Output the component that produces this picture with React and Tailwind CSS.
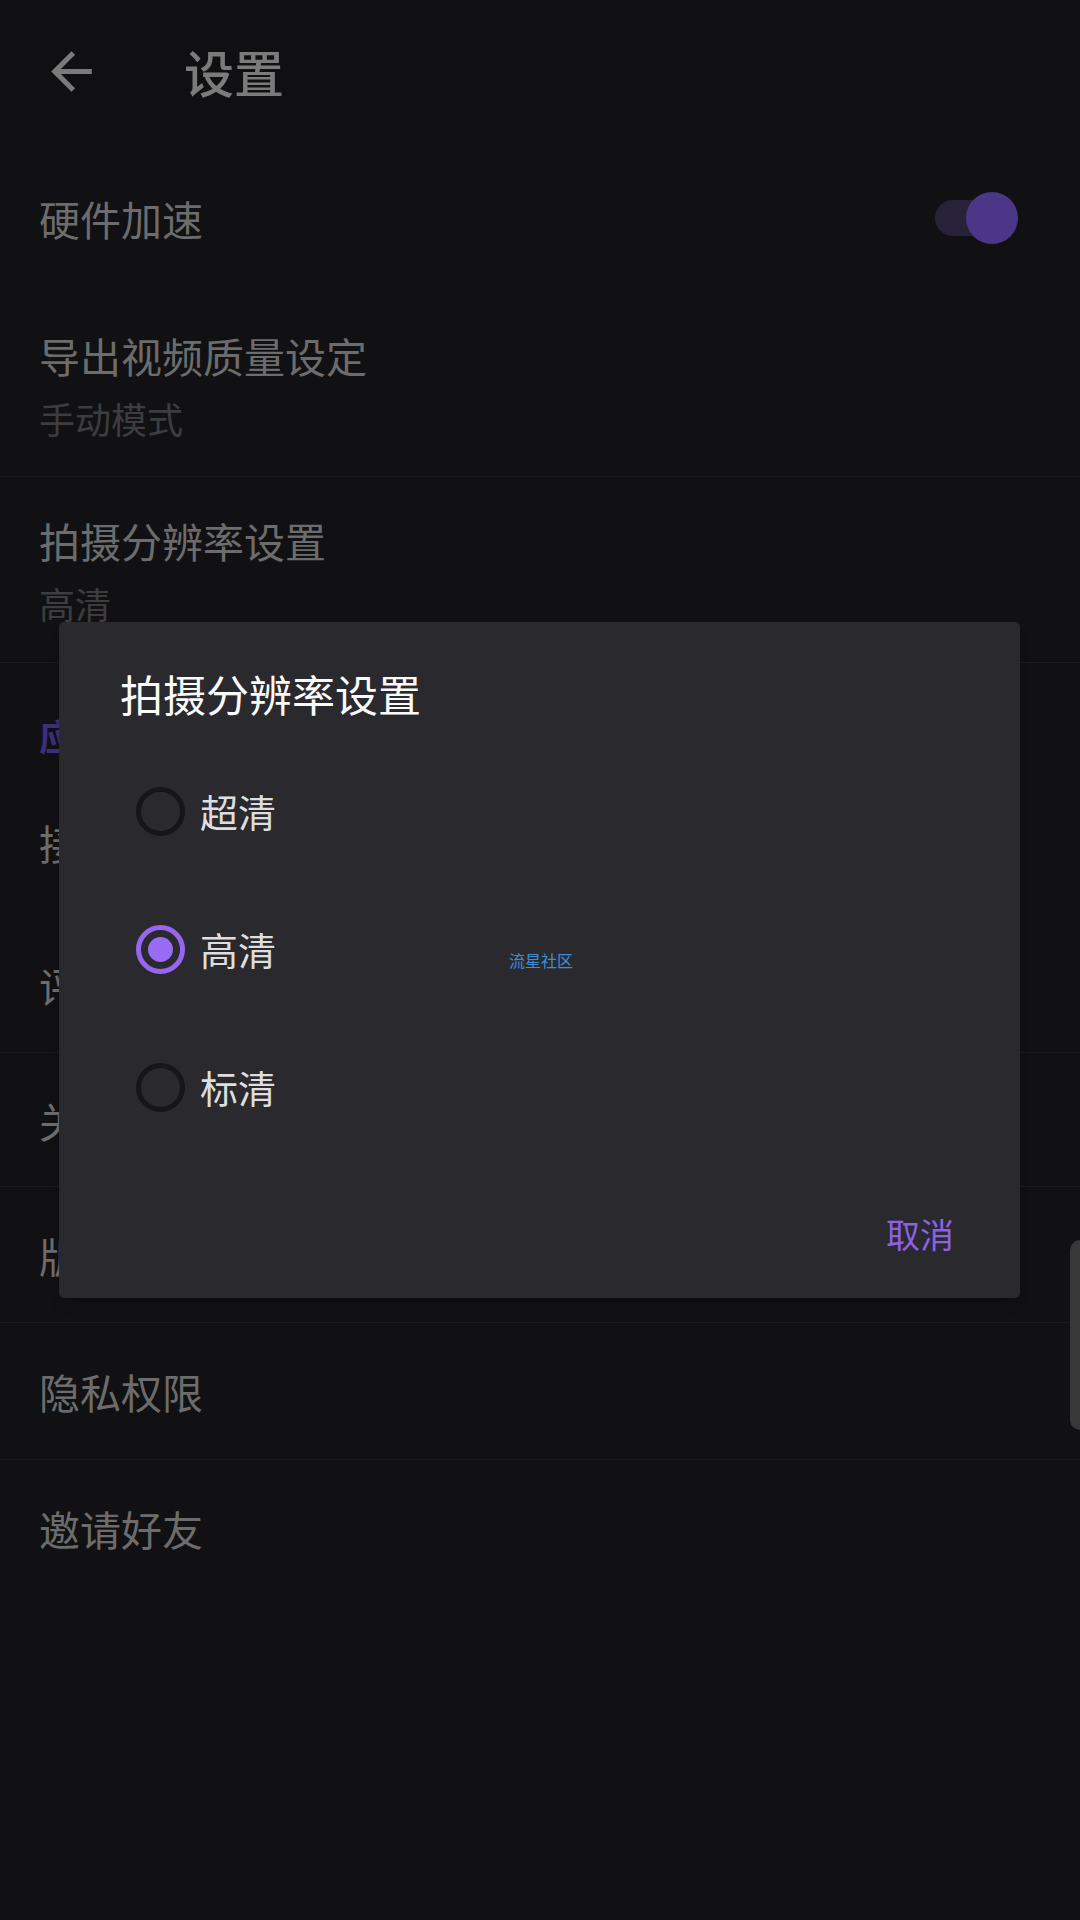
import React from 'react';

const rowText = "text-[41px] leading-[52px] text-[#6c6c6c]";
const subText = "text-[36px] leading-[46px] text-[#3d3d3f]";

const Radio = ({ checked }) =>
  checked ? (
    <div className="w-[49px] h-[49px] rounded-full border-[5px] border-[#9766f0] flex items-center justify-center">
      <div className="w-[25px] h-[25px] rounded-full bg-[#9a6cf5]" />
    </div>
  ) : (
    <div className="w-[49px] h-[49px] rounded-full border-[5px] border-[#161519]" />
  );

const options = [
  { label: '超清', checked: false },
  { label: '高清', checked: true },
  { label: '标清', checked: false },
];

export default function App() {
  return (
    <div className="relative w-[1080px] min-h-[1920px] bg-[#111113] overflow-hidden font-['Noto_Sans_CJK_SC','Noto_Sans',sans-serif]">
      {/* Toolbar */}
      <div className="h-[142px] flex items-center pl-[41px] bg-[#101012]">
        <svg width="61" height="61" viewBox="0 0 24 24" fill="#7a7a7a">
          <path d="M20 11H7.83l5.59-5.59L12 4l-8 8 8 8 1.41-1.41L7.83 13H20v-2z" />
        </svg>
        <span className="ml-[82px] text-[50px] leading-[60px] font-medium text-[#7b7b7b]">设置</span>
      </div>

      {/* Settings list */}
      <div className="h-[152px] flex items-center justify-between pl-[39px] pr-[62px]">
        <span className={rowText}>硬件加速</span>
        <div className="flex items-center">
          <div className="w-[65px] h-[36px] rounded-full bg-[#272238]" />
          <div className="-ml-[34px] w-[52px] h-[52px] rounded-full bg-[#4b3687]" />
        </div>
      </div>

      <div className="h-[183px] flex flex-col justify-center pl-[39px] border-b border-[#1b1b1d]">
        <span className={rowText}>导出视频质量设定</span>
        <span className={`${subText} mt-[14px]`}>手动模式</span>
      </div>

      <div className="h-[186px] flex flex-col justify-center pl-[39px] border-b border-[#1b1b1d]">
        <span className={rowText}>拍摄分辨率设置</span>
        <span className={`${subText} mt-[14px]`}>高清</span>
      </div>

      <div className="h-[111px] pl-[39px] pt-[50px]">
        <span className="text-[36px] leading-[44px] font-bold text-[#3d2e7a]">应用设置</span>
      </div>

      <div className="h-[136px] flex items-center pl-[39px]">
        <span className={rowText}>接收消息通知</span>
      </div>
      <div className="h-[143px] flex items-center pl-[39px] pt-[8px] border-b border-[#1b1b1d]">
        <span className={rowText}>评分鼓励</span>
      </div>
      <div className="h-[134px] flex items-center pl-[39px] border-b border-[#1b1b1d]">
        <span className={rowText}>关于我们</span>
      </div>
      <div className="h-[136px] flex items-center pl-[39px] border-b border-[#1b1b1d]">
        <span className={rowText}>版本更新</span>
      </div>
      <div className="h-[137px] flex items-center pl-[39px] border-b border-[#1b1b1d]">
        <span className={rowText}>隐私权限</span>
      </div>
      <div className="h-[136px] flex items-center pl-[39px]">
        <span className={rowText}>邀请好友</span>
      </div>

      {/* Fast scroll handle */}
      <div className="absolute right-0 top-[1240px] w-[10px] h-[190px] rounded-l-[10px] bg-[#383838]" />

      {/* Dialog */}
      <div className="absolute left-[59px] top-[622px] w-[961px] rounded-[5px] bg-[#2a292e] pt-[43px] shadow-lg">
        <div className="pl-[61px] text-[43px] leading-[56px] text-[#fafafa]">拍摄分辨率设置</div>
        <div className="mt-[21px]">
          {options.map((o) => (
            <div key={o.label} className="h-[138px] flex items-center pl-[77px]">
              <Radio checked={o.checked} />
              <span className="ml-[15px] text-[38px] leading-[48px] text-[#dedede]">{o.label}</span>
            </div>
          ))}
        </div>
        <div className="h-[142px] flex justify-end pt-[58px] pr-[66px]">
          <span className="text-[34px] leading-[40px] text-[#8b61e8]">取消</span>
        </div>
      </div>

      {/* Watermark */}
      <div className="absolute left-[509px] top-[950px] text-[16px] leading-[20px] text-[#3b8fdc]">流星社区</div>
    </div>
  );
}
